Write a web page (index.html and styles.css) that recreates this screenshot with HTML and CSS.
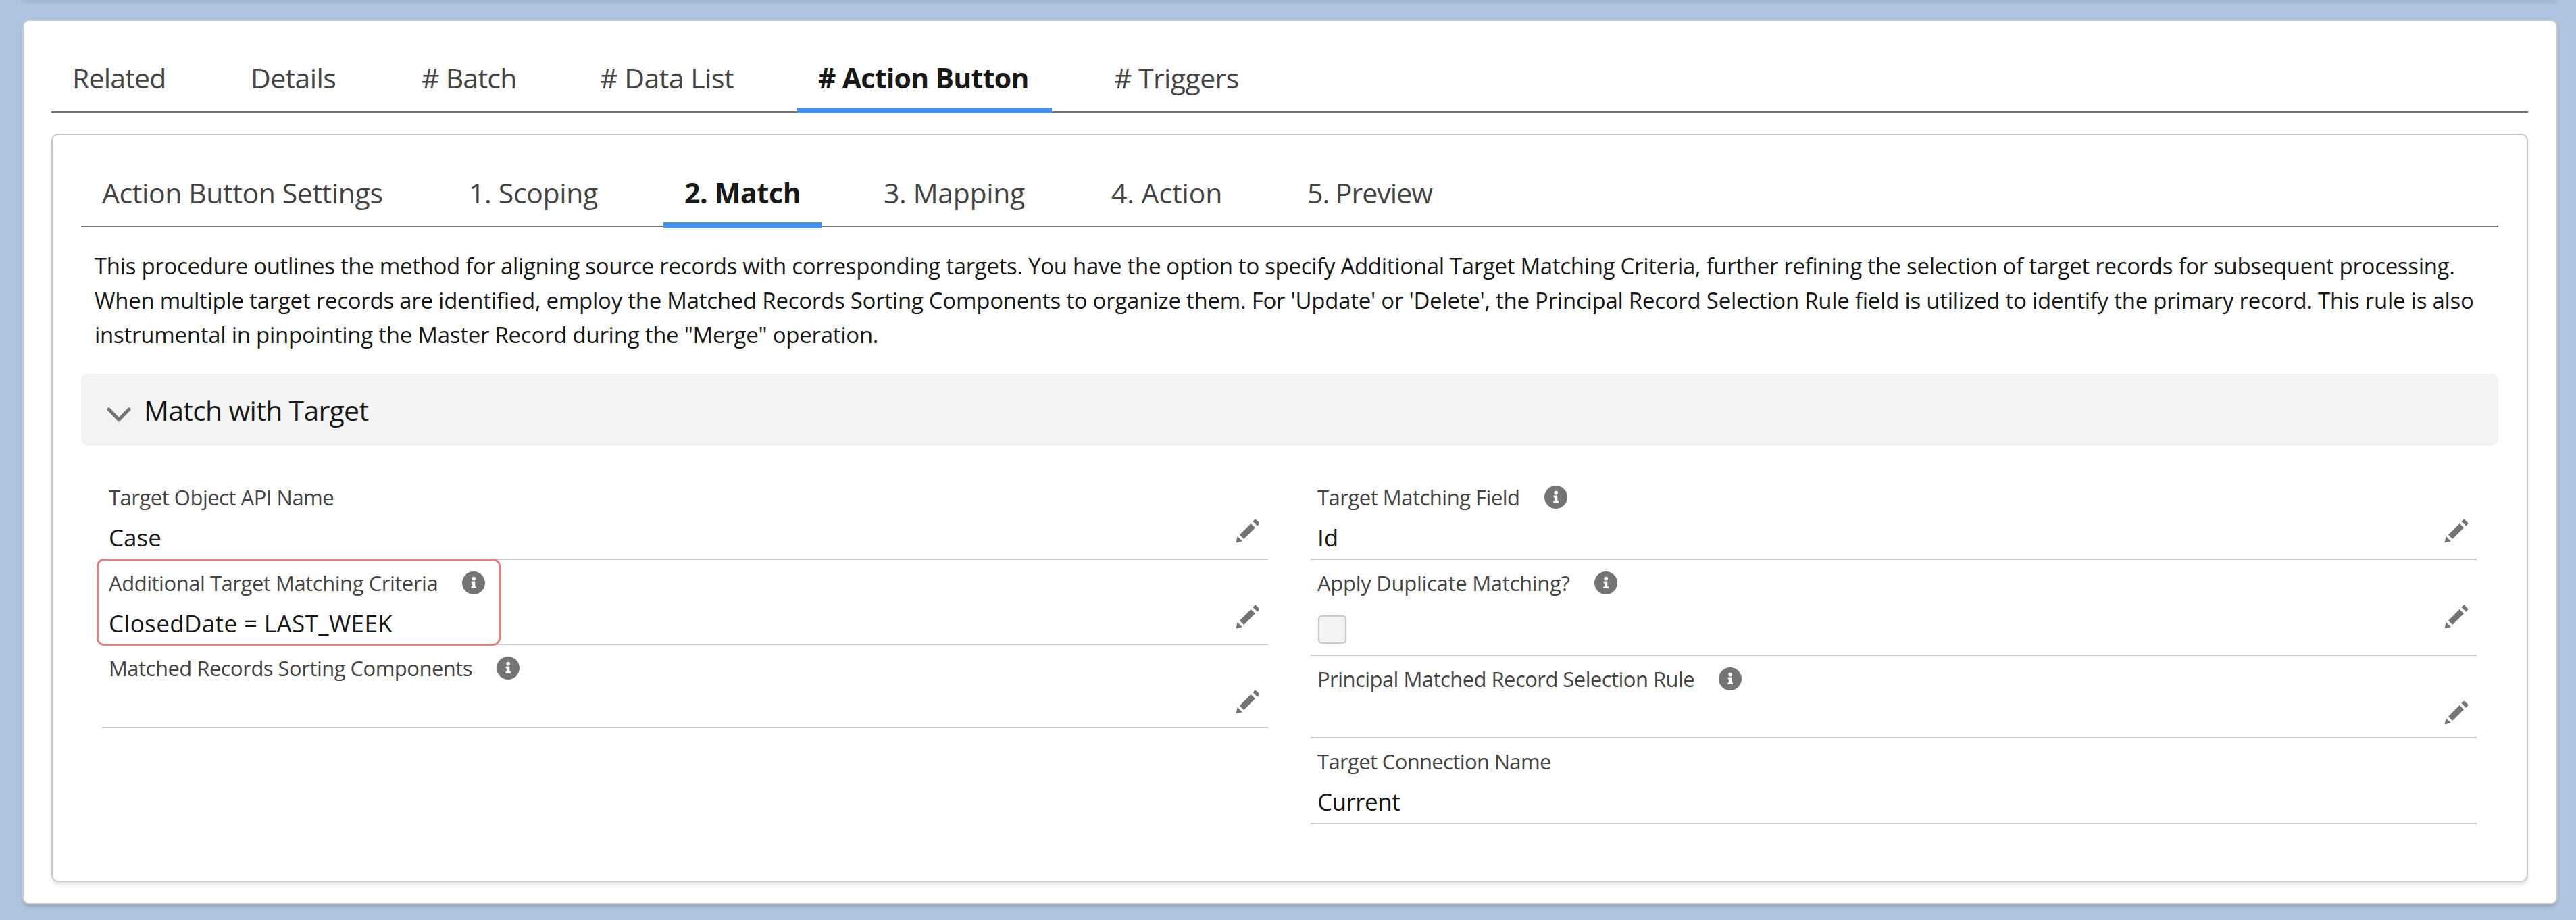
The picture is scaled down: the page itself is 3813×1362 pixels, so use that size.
FILE: index.html
```html
<!DOCTYPE html>
<html lang="en">
<head>
<meta charset="utf-8">
<title>Action Button</title>
<link rel="stylesheet" href="styles.css">
</head>
<body>
<svg class="sprite" aria-hidden="true">
  <symbol id="pencil" viewBox="0 0 36 36">
    <path d="M0.5 35.5 L2.6 26 L10 33.2 Z M5.9 23.8 L22.6 7 L29 13.2 L12.2 30 Z M25.4 4 L28 1.2 Q29 0.2 30.2 1.2 L34.8 5.8 Q35.8 7 34.8 8 L32.2 10.8 Z" fill="#747474"/>
  </symbol>
  <symbol id="info" viewBox="0 0 34 34">
    <circle cx="17" cy="17" r="17" fill="#747474"/>
    <circle cx="17.2" cy="10.6" r="2.8" fill="#fff"/>
    <path d="M13.7 14.6h5.6v7.6h1.7v2.9h-7.6v-2.9h1.7v-4.8h-1.4z" fill="#fff"/>
  </symbol>
</svg>
<div class="previous-card"></div>
<main class="card">
  <nav class="tabs tabs--record">
    <a class="tab t-related">Related</a>
    <a class="tab t-details">Details</a>
    <a class="tab t-batch"># Batch</a>
    <a class="tab t-list"># Data List</a>
    <a class="tab tab--active t-button"># Action Button</a>
    <a class="tab t-triggers"># Triggers</a>
  </nav>
  <section class="panel">
    <nav class="tabs tabs--steps">
      <a class="tab t-settings">Action Button Settings</a>
      <a class="tab t-scoping">1. Scoping</a>
      <a class="tab tab--active t-match">2. Match</a>
      <a class="tab t-mapping">3. Mapping</a>
      <a class="tab t-action">4. Action</a>
      <a class="tab t-preview">5. Preview</a>
    </nav>
    <p class="intro"><span class="line line-1">This procedure outlines the method for aligning source records with corresponding targets. You have the option to specify Additional Target Matching Criteria, further refining the selection of target records for subsequent processing.</span> <span class="line line-2">When multiple target records are identified, employ the Matched Records Sorting Components to organize them. For 'Update' or 'Delete', the Principal Record Selection Rule field is utilized to identify the primary record. This rule is also</span> <span class="line line-3">instrumental in pinpointing the Master Record during the "Merge" operation.</span></p>
    <h3 class="section"><svg class="chevron" viewBox="0 0 36 22"><path d="M3 3 L18 18.5 L33 3" fill="none" stroke="#747474" stroke-width="5" stroke-linecap="round"/></svg><span class="section-title">Match with Target</span></h3>
    <div class="fields">
      <div class="column">
        <div class="field">
          <div class="label"><span class="l-object">Target Object API Name</span></div>
          <div class="value v-case">Case</div>
          <svg class="edit"><use href="#pencil"/></svg>
        </div>
        <div class="field field--marked">
          <div class="label"><span class="l-criteria">Additional Target Matching Criteria</span><svg class="info"><use href="#info"/></svg></div>
          <div class="value v-closed">ClosedDate = LAST_WEEK</div>
          <svg class="edit"><use href="#pencil"/></svg>
        </div>
        <div class="field field--empty">
          <div class="label"><span class="l-sorting">Matched Records Sorting Components</span><svg class="info"><use href="#info"/></svg></div>
          <svg class="edit"><use href="#pencil"/></svg>
        </div>
      </div>
      <div class="column">
        <div class="field">
          <div class="label"><span class="l-field">Target Matching Field</span><svg class="info"><use href="#info"/></svg></div>
          <div class="value v-id">Id</div>
          <svg class="edit"><use href="#pencil"/></svg>
        </div>
        <div class="field field--check">
          <div class="label"><span class="l-duplicate">Apply Duplicate Matching?</span><svg class="info"><use href="#info"/></svg></div>
          <div class="checkbox"></div>
          <svg class="edit"><use href="#pencil"/></svg>
        </div>
        <div class="field field--rule">
          <div class="label"><span class="l-rule">Principal Matched Record Selection Rule</span><svg class="info"><use href="#info"/></svg></div>
          <svg class="edit"><use href="#pencil"/></svg>
        </div>
        <div class="field">
          <div class="label"><span class="l-connection">Target Connection Name</span></div>
          <div class="value v-current">Current</div>
        </div>
      </div>
    </div>
  </section>
</main>
</body>
</html>
```
FILE: styles.css
```css
*, *::before { box-sizing: border-box; }
html { height: 1362px; overflow: hidden; }
body {
  display: flow-root;
  margin: 0;
  height: 1362px;
  overflow: hidden;
  background: #b0c4df;
  font-family: "Open Sans", "Noto Sans", sans-serif;
  color: #181818;
}
.sprite { display: none; }
.previous-card {
  height: 2px;
  margin: -2px 28px 0 33px;
  border-radius: 0 0 9px 9px;
  box-shadow: 0 3px 5px rgba(0, 0, 0, 0.2);
}
.card {
  height: 1310px;
  margin: 29px 27px 0 33px;
  padding: 0 42px 0 41px;
  border: 2px solid #c9c9c9;
  border-radius: 10px;
  background: #fff;
  box-shadow: 0 4px 5px rgba(0, 0, 0, 0.12);
}
.tabs {
  display: grid;
  height: 136px;
  column-gap: 61px;
  border-bottom: 2px solid #747474;
  line-height: 60px;
  font-size: 41px;
  color: #444;
}
.tabs--record { grid-template-columns: 203px 192px 203px 262px 377px 248px; }
.tabs--steps { grid-template-columns: 482px 258px 234px 276px 229px 251px; }
.tab {
  height: 136px;
  padding: 54px 0 0 31px;
  white-space: nowrap;
}
.tabs--steps .tab { height: 137px; padding-top: 55px; }
.tab--active {
  color: #181818;
  font-weight: 700;
  border-bottom: 7px solid #4093f9;
}
.tabs--steps .tab--active { border-bottom-width: 8px; }
.t-related { letter-spacing: -0.8px; }
.t-details { letter-spacing: -0.6px; }
.t-batch { letter-spacing: -0.75px; }
.t-list { letter-spacing: -0.5px; }
.t-button { letter-spacing: -0.7px; }
.t-triggers { letter-spacing: -0.6px; }
.t-settings { letter-spacing: -0.4px; }
.t-scoping { letter-spacing: -0.35px; }
.t-match { letter-spacing: -0.35px; }
.t-mapping { letter-spacing: -0.35px; }
.t-action { letter-spacing: -0.1px; }
.t-preview { letter-spacing: -1px; }
.panel {
  height: 1108px;
  margin-top: 31px;
  padding: 0 42px;
  border: 2px solid #c9c9c9;
  border-radius: 10px;
  box-shadow: 0 4px 5px rgba(0, 0, 0, 0.1);
}
.intro {
  margin: 32px 0 0 20px;
  font-size: 33px;
  line-height: 51px;
}
.line { display: block; white-space: nowrap; }
.line-1 { letter-spacing: -0.318px; }
.line-2 { letter-spacing: -0.265px; }
.line-3 { letter-spacing: -0.26px; }
.section {
  display: flex;
  align-items: center;
  height: 107px;
  margin: 32px 0 0;
  padding-left: 38px;
  border-radius: 10px;
  background: #f3f3f3;
  font-size: 41px;
  font-weight: 400;
}
.chevron { width: 36px; height: 22px; margin: 15px 19px 0 0; }
.section-title { line-height: 60px; letter-spacing: -0.7px; white-space: nowrap; }
.fields {
  display: grid;
  grid-template-columns: 1726px 1726px;
  column-gap: 63px;
  margin: 42px 0 0 31px;
}
.field {
  position: relative;
  height: 127px;
  padding: 10px 0 0 10px;
  border-bottom: 2px solid #c9c9c9;
  white-space: nowrap;
}
.field--marked { height: 126px; }
.field--empty { height: 123px; }
.field--check { height: 142px; }
.field--rule { height: 122px; }
.field--marked::before {
  content: "";
  position: absolute;
  left: -8px;
  top: -2px;
  width: 598px;
  height: 129px;
  border: 3px solid #e08080;
  border-radius: 11px;
}
.label {
  display: flex;
  height: 48px;
  line-height: 48px;
  font-size: 31px;
  color: #444;
}
.l-object { letter-spacing: -0.5px; }
.l-criteria { letter-spacing: -0.46px; }
.l-sorting { letter-spacing: -0.52px; }
.l-field { letter-spacing: -0.5px; }
.l-duplicate { letter-spacing: -0.28px; }
.l-rule { letter-spacing: -0.55px; }
.l-connection { letter-spacing: -0.65px; }
.info { width: 34px; height: 34px; margin: 7px 0 0 36px; }
.value { margin-top: 9px; font-size: 35px; line-height: 54px; }
.v-closed { letter-spacing: 0.38px; }
.v-current { letter-spacing: -0.5px; }
.checkbox {
  width: 42px;
  height: 42px;
  margin: 24px 0 0 1px;
  border: 2px solid #c9c9c9;
  border-radius: 5px;
  background: #f3f3f3;
}
.edit { position: absolute; top: 66px; right: 12px; width: 36px; height: 36px; }
```
